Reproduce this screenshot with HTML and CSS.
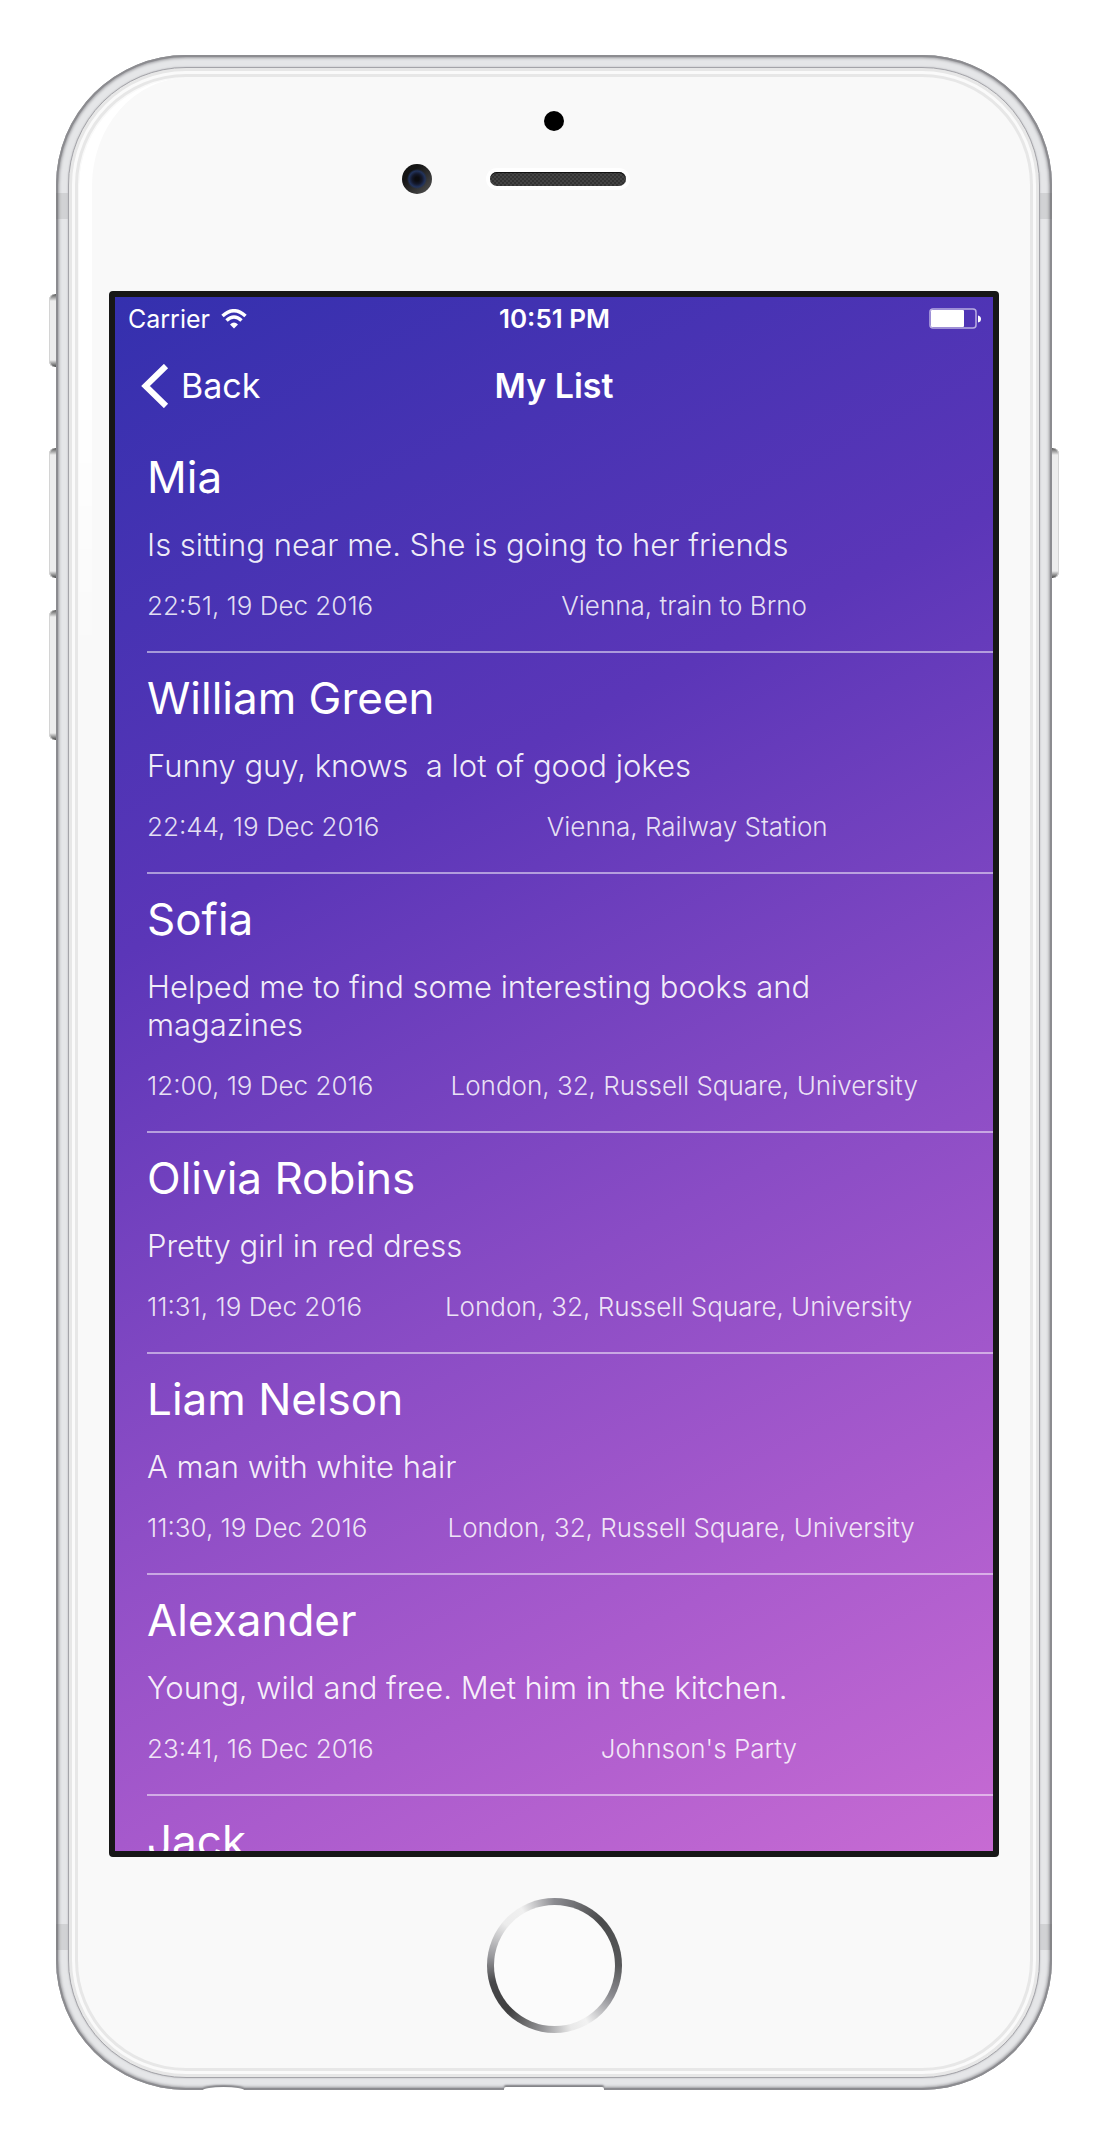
FILE: index.html
```html
<!DOCTYPE html>
<html lang="en">
<head>
<meta charset="utf-8">
<meta name="viewport" content="width=device-width, initial-scale=1">
<title>My List</title>
<link rel="stylesheet" href="styles.css">
</head>
<body>
<div class="phone">
  <span class="key key-mute"></span>
  <span class="key key-up"></span>
  <span class="key key-down"></span>
  <span class="key key-power"></span>
  <span class="band band-top"></span>
  <span class="band band-bottom"></span>
  <span class="jack"></span>
  <span class="port"></span>
  <div class="bezel">
    <div class="forehead">
      <span class="sensor"></span>
      <div class="ear-row">
        <span class="camera"></span>
        <span class="speaker"></span>
      </div>
    </div>
    <main class="screen">
      <div class="status">
        <div class="carrier">
          <span>Carrier</span>
          <svg class="wifi" viewBox="0 0 26 20" width="26" height="20" aria-hidden="true">
            <path d="M1.500 7Q13 -3.500 24.500 7" fill="none" stroke="#fff" stroke-width="3.500"/>
            <path d="M5.500 11.500Q13 4.500 20.500 11.500" fill="none" stroke="#fff" stroke-width="3.500"/>
            <path d="M9 15.500Q13 11.500 17 15.500L13 19.500Z" fill="#fff"/>
          </svg>
        </div>
        <time class="clock">10:51 PM</time>
        <svg class="battery" viewBox="0 0 52 22" width="52" height="22" aria-hidden="true">
          <rect x="1" y="1" width="46" height="19" rx="3" fill="none" stroke="#fff" stroke-opacity=".6" stroke-width="1.500"/>
          <rect x="2" y="2" width="33" height="17" rx="1" fill="#fff"/>
          <path d="M49 7.500Q52 8 52 11T49 14.500Z" fill="#fff"/>
        </svg>
      </div>
      <nav class="nav">
        <a class="back" href="#">
          <svg viewBox="0 0 28 44" width="28" height="44" aria-hidden="true"><path d="M25 2L4.500 22L25 42" fill="none" stroke="#fff" stroke-width="6"/></svg>
          <span>Back</span>
        </a>
        <h1 class="title">My List</h1>
      </nav>
      <ul class="list">
        <li class="entry">
          <h2 class="name">Mia</h2>
          <p class="note">Is sitting near me. She is going to her friends</p>
          <div class="meta"><time>22:51, 19 Dec 2016</time><span class="place">Vienna, train to Brno</span></div>
        </li>
        <li class="entry">
          <h2 class="name">William Green</h2>
          <p class="note">Funny guy, knows  a lot of good jokes</p>
          <div class="meta"><time>22:44, 19 Dec 2016</time><span class="place">Vienna, Railway Station</span></div>
        </li>
        <li class="entry">
          <h2 class="name">Sofia</h2>
          <p class="note">Helped me to find some interesting books and magazines</p>
          <div class="meta"><time>12:00, 19 Dec 2016</time><span class="place">London, 32, Russell Square, University</span></div>
        </li>
        <li class="entry">
          <h2 class="name">Olivia Robins</h2>
          <p class="note">Pretty girl in red dress</p>
          <div class="meta"><time>11:31, 19 Dec 2016</time><span class="place">London, 32, Russell Square, University</span></div>
        </li>
        <li class="entry">
          <h2 class="name">Liam Nelson</h2>
          <p class="note">A man with white hair</p>
          <div class="meta"><time>11:30, 19 Dec 2016</time><span class="place">London, 32, Russell Square, University</span></div>
        </li>
        <li class="entry">
          <h2 class="name">Alexander</h2>
          <p class="note">Young, wild and free. Met him in the kitchen.</p>
          <div class="meta"><time>23:41, 16 Dec 2016</time><span class="place">    Johnson's Party</span></div>
        </li>
        <li class="entry">
          <h2 class="name">Jack</h2>
        </li>
      </ul>
    </main>
    <button class="home" type="button" aria-label="Home"></button>
  </div>
</div>
</body>
</html>
```
FILE: styles.css
```css
* {
  box-sizing: border-box;
}

body {
  margin: 0;
  background: #fff;
  font-family: Inter, "Liberation Sans", sans-serif;
  color: #fff;
}

h1, h2, p, ul {
  margin: 0;
  padding: 0;
  font-weight: 400;
}

/* Device shell */
.phone {
  position: relative;
  margin: 55px 48px 51px 56px;
  padding: 12px;
  border-radius: 130px;
  background: #e5e6e8;
  box-shadow: inset 0 0 0 2px #8c8c90, inset 0 0 3px 3px #98989c;
}

.bezel {
  position: relative;
  display: flex;
  flex-direction: column;
  padding: 0 40px 44px;
  border: 1px solid #a4a4a9;
  border-radius: 118px;
  background: #f9f9f9;
  box-shadow: 0 0 2px #b4b4b8, inset 0 0 0 3px #e7e7e7, inset 0 0 0 6px #fafafa, inset 0 0 0 9px #e7e7e7;
}

/* Light reflection along the upper left edge of the glass */
.bezel::before {
  content: "";
  position: absolute;
  left: 10px;
  top: 10px;
  width: 130px;
  height: 600px;
  border-left: 13px solid #fff;
  border-top-left-radius: 108px;
  -webkit-mask-image: linear-gradient(#000 50%, transparent);
  mask-image: linear-gradient(#000 50%, transparent);
}

.key {
  position: absolute;
  z-index: -1;
  left: -7px;
  width: 14px;
  height: 130px;
  border-radius: 6px;
  background: linear-gradient(#555 0, #ededed 7px, #ededed calc(100% - 7px), #444 100%);
  box-shadow: inset 1px 0 0 #d4d4d4;
}

.key-mute {
  top: 239px;
  height: 73px;
}

.key-up {
  top: 393px;
}

.key-down {
  top: 555px;
}

.key-power {
  left: auto;
  right: -7px;
  top: 393px;
  box-shadow: inset -1px 0 0 #d4d4d4;
}

.band {
  position: absolute;
  left: 0;
  right: 0;
  height: 26px;
  border: solid rgba(90, 90, 90, 0.14);
  border-width: 0 12px;
}

.band-top {
  top: 138px;
}

.band-bottom {
  bottom: 140px;
}

.jack,
.port {
  position: absolute;
  bottom: 0;
  background: #fff;
  box-shadow: 0 -2px 2px #7c7c80;
  clip-path: inset(-6px -4px 0 -4px);
}

.jack {
  left: 147px;
  width: 41px;
  height: 3px;
  border-radius: 50% 50% 0 0 / 100% 100% 0 0;
}

.port {
  left: calc(50% - 50px);
  width: 100px;
  height: 3px;
  border-radius: 2px 2px 0 0;
}

.forehead {
  display: flex;
  flex-direction: column;
  align-items: center;
  gap: 33px;
  padding: 43px 0 97px;
}

.sensor {
  width: 20px;
  height: 20px;
  border-radius: 50%;
  background: #000;
}

.ear-row {
  display: flex;
  align-items: center;
  gap: 58px;
  padding-right: 80px;
}

.camera {
  width: 30px;
  height: 30px;
  border-radius: 50%;
  background:
    radial-gradient(circle, #0c0c10 0 2px, #14182a 5px, #22335c 8px, transparent 10px),
    linear-gradient(135deg, #141414 30%, #555);
}

.speaker {
  width: 136px;
  height: 14px;
  border-radius: 7px;
  background: repeating-conic-gradient(#333 0 25%, #444 0 50%) 0 0 / 4px 4px;
  box-shadow: 0 0 0 4px #fff, inset 0 1px 0 #111;
}

.home {
  align-self: center;
  width: 135px;
  height: 135px;
  margin-top: 41px;
  padding: 0;
  border: 7px solid transparent;
  border-radius: 50%;
  background:
    linear-gradient(#fbfbfb, #fbfbfb) padding-box,
    conic-gradient(#8b8b90 0deg, #4a4b4c 45deg, #58595a 90deg, #8b8b90 118deg, #f2f2f2 150deg, #e9e9e9 165deg, #97979a 190deg, #404040 225deg, #48484a 255deg, #98989c 278deg, #ececec 310deg, #f0f0f0 330deg, #8b8b90 360deg) border-box;
}

/* App screen */
.screen {
  aspect-ratio: 445 / 783;
  min-height: 0;
  overflow: hidden;
  border: 6px solid #171717;
  border-radius: 4px;
  background: linear-gradient(153deg, #3430ae 0%, #5b36b8 33%, #8a4cc5 60%, #aa5bcd 80%, #c76bd3 100%);
}

.status {
  display: grid;
  grid-template-columns: 1fr auto 1fr;
  align-items: center;
  height: 44px;
  padding: 0 12px 0 13px;
  font-size: 25px;
  line-height: 44px;
}

.carrier {
  display: flex;
  align-items: center;
  gap: 11px;
}

.clock {
  font-size: 26px;
  font-weight: 600;
}

.battery {
  justify-self: end;
}

.nav {
  display: grid;
  grid-template-columns: 1fr auto 1fr;
  align-items: center;
  height: 90px;
  padding: 0 26px;
  font-size: 34px;
  line-height: 44px;
}

.back {
  display: flex;
  align-items: center;
  gap: 12px;
  color: inherit;
  text-decoration: none;
}

.title {
  font-size: 34px;
  font-weight: 600;
}

.list {
  padding: 1px 0 0 32px;
  list-style: none;
}

.entry {
  padding: 17px 32px 29px 0;
  border-bottom: 2px solid rgba(255, 255, 255, 0.5);
}

.name {
  font-size: 44px;
  line-height: 56px;
}

.note {
  margin-top: 21px;
  font-size: 31px;
  font-weight: 300;
  line-height: 38px;
  white-space: pre-wrap;
  color: rgba(255, 255, 255, 0.92);
}

.meta {
  display: flex;
  gap: 34px;
  margin-top: 26px;
  font-size: 26px;
  font-weight: 300;
  line-height: 32px;
  color: rgba(255, 255, 255, 0.85);
}

.place {
  flex: 1;
  text-align: center;
  white-space: pre-wrap;
}
```
